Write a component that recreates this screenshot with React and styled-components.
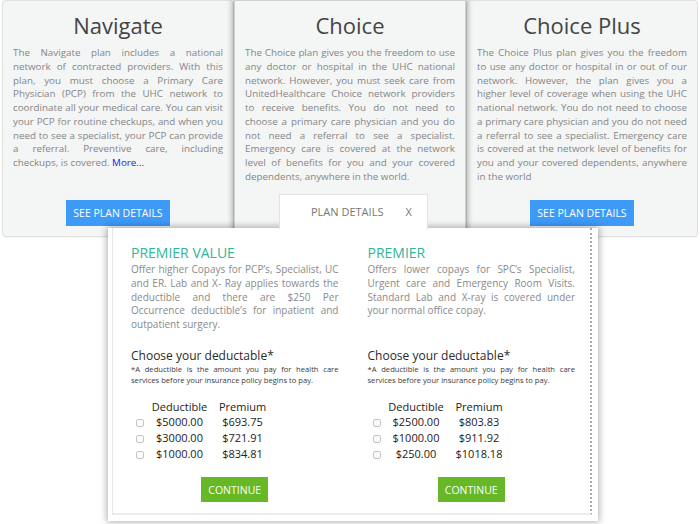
import React from "react";
import styled, { createGlobalStyle } from "styled-components";

const GlobalStyle = createGlobalStyle`
  html, body { margin: 0; padding: 0; background: #fff; }
  body { font-family: "Open Sans", "Liberation Sans", sans-serif; }
  * { box-sizing: border-box; }
`;

const Page = styled.div`
  position: relative;
  width: 700px;
  height: 524px;
  padding: 0 2px;
  display: grid;
  grid-template-columns: repeat(3, 232px);
  align-items: start;
  overflow: hidden;
`;

const PlanCard = styled.section`
  position: relative;
  z-index: ${(p) => (p.$active ? 1 : 0)};
  height: 237px;
  display: flex;
  flex-direction: column;
  padding: 9px 10px 10px;
  background: #f4f5f5;
  border: 1px solid ${(p) => (p.$active ? "#d0d0d0" : "#e0e1e1")};
  border-radius: ${(p) => (p.$active ? "0" : "4px")};
  box-shadow: ${(p) =>
    p.$active ? "0 0 6px 1px rgba(0,0,0,0.38)" : "0 1px 2px rgba(0,0,0,0.06)"};
`;

const CardTitle = styled.h2`
  margin: 0 0 6px;
  font-size: 22px;
  line-height: 30px;
  font-weight: 400;
  color: #444;
  text-align: center;
`;

const CardText = styled.p`
  margin: 0;
  font-size: 9.8px;
  line-height: 13.75px;
  color: #858585;
  text-align: justify;
`;

const MoreLink = styled.a`
  color: #1b1be0;
  text-decoration: none;
`;

const SeeButton = styled.button`
  margin-top: auto;
  align-self: center;
  height: 26px;
  padding: 0 7px;
  border: none;
  border-radius: 0;
  background: #3d9af7;
  color: #fff;
  font-family: inherit;
  font-size: 10.5px;
  text-transform: uppercase;
  cursor: pointer;
`;

const Popup = styled.div`
  position: absolute;
  left: 108px;
  top: 228px;
  width: 490px;
  height: 293px;
  z-index: 2;
  display: flex;
  background: #fff;
  box-shadow: 0 0 7px 1px rgba(0, 0, 0, 0.33);
`;

const Tab = styled.div`
  position: absolute;
  left: 171px;
  top: -34px;
  width: 149px;
  height: 35px;
  display: flex;
  align-items: center;
  padding: 0 0 1px 31px;
  background: #fff;
  border: 1px solid #e3e3e3;
  border-bottom: none;
  font-size: 11px;
  color: #777;
`;

const CloseMark = styled.span`
  margin-left: 22px;
  cursor: pointer;
`;

const PopupInner = styled.div`
  flex: 1;
  margin: 0 6px 6px 4px;
  padding: 15px 15px 0 18px;
  border-left: 1px solid #e6e6e6;
  border-bottom: 2px solid #ececec;
  border-right: 2px dotted #a9a9a9;
  display: grid;
  grid-template-columns: 1fr 1fr;
  column-gap: 29px;
`;

const Column = styled.div`
  display: flex;
  flex-direction: column;
`;

const PlanName = styled.h3`
  margin: 0;
  font-size: 14px;
  line-height: 20px;
  font-weight: 400;
  color: #2fb59b;
`;

const PlanDesc = styled.p`
  margin: 0 0 15.5px;
  min-height: 69px;
  font-size: 10px;
  line-height: 13.75px;
  color: #8a8a8a;
  text-align: justify;
`;

const ChooseTitle = styled.h4`
  margin: 0;
  font-size: 12px;
  line-height: 16px;
  font-weight: 400;
  color: #2a2a2a;
`;

const Footnote = styled.p`
  margin: 0 0 13.6px;
  font-size: 7.6px;
  line-height: 11px;
  color: #3a3a3a;
  text-align: justify;
`;

const RateTable = styled.div`
  display: grid;
  grid-template-columns: 17px 63px 63px;
  font-size: 11px;
  color: #222;
  text-align: center;
`;

const HeadCell = styled.div`
  line-height: 15px;
`;

const Cell = styled.div`
  line-height: 16px;
`;

const CheckCell = styled.div`
  display: flex;
  align-items: center;
  padding: 2px 0 0 5px;
`;

const Check = styled.input.attrs({ type: "checkbox" })`
  appearance: none;
  -webkit-appearance: none;
  margin: 0;
  width: 8px;
  height: 8px;
  border: 1px solid #c6c6c6;
  border-radius: 2px;
  background: #fafafa;
`;

const ContinueButton = styled.button`
  margin-top: 15px;
  align-self: center;
  width: 67px;
  height: 25px;
  padding: 0;
  border: none;
  border-radius: 0;
  background: #67b826;
  color: #fff;
  font-family: inherit;
  font-size: 10.5px;
  text-transform: uppercase;
  cursor: pointer;
`;

const cards = [
  {
    title: "Navigate",
    text:
      "The Navigate plan includes a national network of contracted providers. With this plan, you must choose a Primary Care Physician (PCP) from the UHC network to coordinate all your medical care. You can visit your PCP for routine checkups, and when you need to see a specialist, your PCP can provide a referral. Preventive care, including checkups, is covered.",
    more: true,
  },
  {
    title: "Choice",
    text:
      "The Choice plan gives you the freedom to use any doctor or hospital in the UHC national network. However, you must seek care from UnitedHealthcare Choice network providers to receive benefits. You do not need to choose a primary care physician and you do not need a referral to see a specialist. Emergency care is covered at the network level of benefits for you and your covered dependents, anywhere in the world.",
    active: true,
  },
  {
    title: "Choice Plus",
    text:
      "The Choice Plus plan gives you the freedom to use any doctor or hospital in or out of our network. However, the plan gives you a higher level of coverage when using the UHC national network. You do not need to choose a primary care physician and you do not need a referral to see a specialist. Emergency care is covered at the network level of benefits for you and your covered dependents, anywhere in the world",
  },
];

const options = [
  {
    name: "PREMIER VALUE",
    desc:
      "Offer higher Copays for PCP\u2019s, Specialist, UC and ER. Lab and X- Ray applies towards the deductible and there are $250 Per Occurrence deductible\u2019s for inpatient and outpatient surgery.",
    rows: [
      ["$5000.00", "$693.75"],
      ["$3000.00", "$721.91"],
      ["$1000.00", "$834.81"],
    ],
  },
  {
    name: "PREMIER",
    desc:
      "Offers lower copays for SPC\u2019s Specialist, Urgent care and Emergency Room Visits. Standard Lab and X-ray is covered under your normal office copay.",
    rows: [
      ["$2500.00", "$803.83"],
      ["$1000.00", "$911.92"],
      ["$250.00", "$1018.18"],
    ],
  },
];

export default function App() {
  return (
    <>
      <GlobalStyle />
      <Page>
        {cards.map((c) => (
          <PlanCard key={c.title} $active={c.active}>
            <CardTitle>{c.title}</CardTitle>
            <CardText>
              {c.text}
              {c.more && (
                <>
                  {" "}
                  <MoreLink href="#">More...</MoreLink>
                </>
              )}
            </CardText>
            {!c.active && <SeeButton>See plan details</SeeButton>}
          </PlanCard>
        ))}
        <Popup>
          <Tab>
            PLAN DETAILS<CloseMark>X</CloseMark>
          </Tab>
          <PopupInner>
            {options.map((o) => (
              <Column key={o.name}>
                <PlanName>{o.name}</PlanName>
                <PlanDesc>{o.desc}</PlanDesc>
                <ChooseTitle>Choose your deductable*</ChooseTitle>
                <Footnote>
                  *A deductible is the amount you pay for health care services
                  before your insurance policy begins to pay.
                </Footnote>
                <RateTable>
                  <HeadCell />
                  <HeadCell>Deductible</HeadCell>
                  <HeadCell>Premium</HeadCell>
                  {o.rows.map(([d, p]) => (
                    <React.Fragment key={d}>
                      <CheckCell>
                        <Check />
                      </CheckCell>
                      <Cell>{d}</Cell>
                      <Cell>{p}</Cell>
                    </React.Fragment>
                  ))}
                </RateTable>
                <ContinueButton>Continue</ContinueButton>
              </Column>
            ))}
          </PopupInner>
        </Popup>
      </Page>
    </>
  );
}
